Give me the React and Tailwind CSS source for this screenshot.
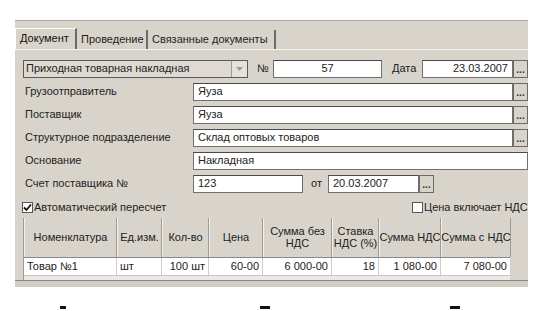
const font = { fontFamily: '"Liberation Sans", Arial, sans-serif' };

function Input({ className = "", children, align = "left" }) {
  return (
    <div
      className={`h-full bg-white border border-[#707070] border-t-[#4a4a4a] flex items-center px-1 text-[11px] text-[#222] ${
        align === "right" ? "justify-end" : align === "center" ? "justify-center" : ""
      } ${className}`}
    >
      {children}
    </div>
  );
}

function Dots() {
  return (
    <div className="h-full w-[15px] shrink-0 bg-[#d8d4cc] border border-[#6a6a6a] flex items-end justify-center pb-[2px] text-[10px] font-bold leading-none text-[#333]">
      ...
    </div>
  );
}

function Box({ checked }) {
  return (
    <div className="w-[11px] h-[11px] bg-white border border-[#555] flex items-center justify-center">
      {checked && (
        <svg width="9" height="9" viewBox="0 0 9 9">
          <path d="M1 4.5 L3.5 7 L8 1.5" stroke="#111" strokeWidth="1.8" fill="none" />
        </svg>
      )}
    </div>
  );
}

const cols = [
  [["Номенклатура"], "Товар №1", "left"],
  [["Ед.изм."], "шт", "left"],
  [["Кол-во"], "100 шт", "right"],
  [["Цена"], "60-00", "right"],
  [["Сумма без", "НДС"], "6 000-00", "right"],
  [["Ставка", "НДС (%)"], "18", "right"],
  [["Сумма НДС"], "1 080-00", "right"],
  [["Сумма с НДС"], "7 080-00", "right"],
];

function Field({ label, value, dots = true }) {
  return (
    <div className="flex h-[18px] mt-[5px] items-center">
      <div className="w-[178px] pl-[10px] text-[11px] text-[#222]">{label}</div>
      <Input className="flex-1">{value}</Input>
      {dots ? <Dots /> : null}
    </div>
  );
}

export default function App() {
  return (
    <div className="w-[545px] h-[311px] bg-white overflow-hidden" style={font}>
      <div className="ml-[15px] mt-[20px] w-[513px] h-[267px] bg-[#d8d4cc] border-t border-[#aeaaa2] flex flex-col">
        {/* tabs */}
        <div className="h-[29px] flex items-end border-b border-[#f4f2ee]">
          <div className="h-[21px] w-[62px] border-t border-l border-white border-r-2 border-r-[#6a6a6a] flex items-center pl-[4px] text-[11px] text-[#111]">
            Документ
          </div>
          <div className="h-[19px] w-[71px] border-r-2 border-[#6a6a6a] flex items-center pl-[4px] text-[11px] text-[#222]">
            Проведение
          </div>
          <div className="h-[19px] w-[128px] border-r-2 border-[#6a6a6a] flex items-center pl-[4px] text-[11px] text-[#222]">
            Связанные документы
          </div>
        </div>

        {/* row 1 */}
        <div className="flex h-[18px] mt-[10px] items-center">
          <div className="ml-[8px] w-[225px] h-full bg-white border border-[#5a5a5a] flex">
            <div className="flex-1 flex items-center pl-[2px] text-[11px] text-[#222] bg-[#dedad3]">
              Приходная товарная накладная
            </div>
            <div className="w-[16px] h-full bg-[#e4e1db] border-l border-[#9a9a9a] flex items-center justify-center">
              <svg width="7" height="4" viewBox="0 0 7 4">
                <path d="M0 0 L7 0 L3.5 4 Z" fill="#9a9a9a" />
              </svg>
            </div>
          </div>
          <div className="w-[25px] pl-[9px] text-[11px] text-[#222]">№</div>
          <Input className="w-[109px]" align="center">57</Input>
          <div className="w-[40px] pl-[10px] text-[11px] text-[#222]">Дата</div>
          <Input className="w-[91px]" align="right">23.03.2007</Input>
          <Dots />
        </div>

        <Field label="Грузоотправитель" value="Яуза" />
        <Field label="Поставщик" value="Яуза" />
        <Field label="Структурное подразделение" value="Склад оптовых товаров" />
        <Field label="Основание" value="Накладная" dots={false} />

        <div className="flex h-[18px] mt-[5px] items-center">
          <div className="w-[178px] pl-[10px] text-[11px] text-[#222]">Счет поставщика №</div>
          <Input className="w-[110px]">123</Input>
          <div className="w-[25px] pl-[8px] text-[11px] text-[#222]">от</div>
          <Input className="w-[91px]">20.03.2007</Input>
          <Dots />
        </div>

        {/* checkboxes */}
        <div className="flex h-[13px] mt-[8px] items-center text-[11px] text-[#222]">
          <div className="ml-[7px] flex items-center">
            <Box checked />
            <span className="ml-[1px]">Автоматический пересчет</span>
          </div>
          <div className="ml-auto flex items-center whitespace-nowrap w-[116px] overflow-hidden">
            <Box />
            <span className="ml-[1px]">Цена включает НДС</span>
          </div>
        </div>

        {/* table */}
        <div className="ml-[8px] mt-[4px] w-[487px] h-[63px] bg-[#ebe9e5] border-l border-[#9a9a9a]">
          <div className="grid grid-cols-[93px_45px_47px_54px_69px_47px_62px_70px] h-[40px] border-b border-[#8a8a8a]">
            {cols.map(([h]) => (
              <div
                key={h.join(" ")}
                className="bg-[#d8d4cc] border-r border-[#9e9a94] border-l border-l-[#f2f0ec] flex flex-col items-center justify-center text-center leading-[12px] whitespace-nowrap text-[11px] text-[#222]"
              >
                {h.map((l) => (
                  <span key={l}>{l}</span>
                ))}
              </div>
            ))}
          </div>
          <div className="grid grid-cols-[93px_45px_47px_54px_69px_47px_62px_70px] h-[18px] bg-white border-b border-[#c8c6c2]">
            {cols.map(([h, v, a]) => (
              <div
                key={h.join(" ")}
                className={`border-r border-[#cfcdc9] flex items-center px-[3px] text-[11px] text-[#222] ${
                  a === "right" ? "justify-end" : ""
                }`}
              >
                {v}
              </div>
            ))}
          </div>
        </div>

        {/* bottom bar */}
        <div className="h-[7px] bg-[#d2cec6] border-t border-[#8c8882]" />
      </div>

      {/* cut-off captions below */}
      <div className="flex mt-[19px] h-[6px] items-start">
        <div className="ml-[60px] w-[6px] h-[3px] bg-[#111]" />
        <div className="ml-[194px] w-[10px] h-[3px] bg-[#111]" />
        <div className="ml-[180px] w-[10px] h-[3px] bg-[#111]" />
      </div>
    </div>
  );
}
